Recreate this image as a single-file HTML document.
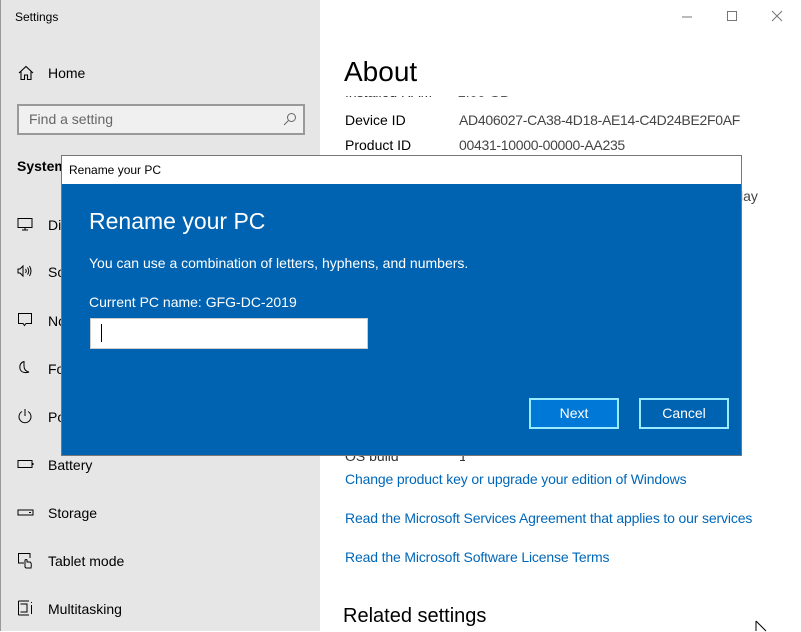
<!DOCTYPE html><html><head><style>
body{margin:0;width:801px;height:631px;overflow:hidden;position:relative;font-family:"Liberation Sans",sans-serif;background:#fff}
.a{position:absolute;white-space:nowrap}
.side{position:absolute;left:0;top:0;width:320px;height:631px;background:#e6e6e6;border-left:1px solid #999;box-sizing:border-box}
.nav{font-size:14px;color:#000}
.lnk{color:#0067b8;font-size:14px;letter-spacing:-0.15px}
.btn{position:absolute;top:398px;width:90px;height:31px;border:2px solid #99ebff;box-sizing:border-box;color:#fff;font-size:14px;text-align:center;line-height:27px}
</style></head><body>
<div class="side"></div>
<div class="a" style="left:15px;top:10px;font-size:12px">Settings</div>
<svg class="a" style="left:18px;top:65px" width="16" height="16" viewBox="0 0 16 16" fill="none" stroke="#000" stroke-width="1.1"><path d="M1 8 L8 1.5 L15 8 M3 6.5 V14.5 H6.5 V10 H9.5 V14.5 H13 V6.5"/></svg>
<div class="a nav" style="left:48px;top:65px">Home</div>
<div class="a" style="left:17px;top:104px;width:288px;height:31px;border:2px solid #999;box-sizing:border-box;background:#f0f0f0"></div>
<div class="a" style="left:29px;top:111px;font-size:14px;color:#666">Find a setting</div>
<svg class="a" style="left:283px;top:112px" width="14" height="14" viewBox="0 0 14 14" fill="none" stroke="#666"><circle cx="8.5" cy="5.5" r="4"/><path d="M5.5 8.5 L1 13"/></svg>
<div class="a" style="left:17px;top:158px;font-size:14px;font-weight:bold">System</div>
<svg class="a" style="left:17px;top:217px" width="16" height="14" fill="none" stroke="#000"><rect x="1" y="1.5" width="14" height="9"/><path d="M8 10.5V13M5 13H11"/></svg>
<div class="a nav" style="left:48px;top:217px">Di</div>
<svg class="a" style="left:17px;top:264px" width="16" height="14" fill="none" stroke="#000"><path d="M1 5H3L6 2V12L3 9H1Z M8.5 5Q10 7 8.5 9 M10.5 3.5Q13 7 10.5 10.5 M12.5 2Q15.5 7 12.5 12"/></svg>
<div class="a nav" style="left:48px;top:264px">So</div>
<svg class="a" style="left:17px;top:312px" width="16" height="16" fill="none" stroke="#000"><path d="M1.5 1.5H14.5V11.5H9L7.5 13.5L6 11.5H1.5Z"/></svg>
<div class="a nav" style="left:48px;top:313px">No</div>
<svg class="a" style="left:17px;top:360px" width="16" height="16" fill="none" stroke="#000"><path d="M7 1.5Q2 3 3 9Q5 14 12 12Q7 11 7 6Q7 3.5 7 1.5Z"/></svg>
<div class="a nav" style="left:48px;top:361px">Fo</div>
<svg class="a" style="left:17px;top:408px" width="16" height="16" fill="none" stroke="#000"><path d="M5 3.5A6 6 0 1 0 11 3.5M8 1V8"/></svg>
<div class="a nav" style="left:48px;top:409px">Po</div>
<svg class="a" style="left:17px;top:458px" width="18" height="12" fill="none" stroke="#000"><rect x="1" y="2.5" width="14" height="7"/><path d="M15.5 5V7" stroke-width="2"/></svg>
<div class="a nav" style="left:48px;top:457px">Battery</div>
<svg class="a" style="left:17px;top:507px" width="18" height="12" fill="none" stroke="#000"><rect x="1" y="3" width="15" height="5"/><path d="M12 5.5H14"/></svg>
<div class="a nav" style="left:48px;top:505px">Storage</div>
<svg class="a" style="left:17px;top:552px" width="18" height="18" fill="none" stroke="#000"><path d="M7 11H1.5V1.5H13V6M8 15V8Q9.5 7 10 8V10H13Q15 11 14 16H9Z"/></svg>
<div class="a nav" style="left:48px;top:553px">Tablet mode</div>
<svg class="a" style="left:17px;top:600px" width="18" height="18" fill="none" stroke="#000"><path d="M1.5 1H12M1.5 15H12M1.5 1V15M3.5 4H10V12H3.5M14.5 2V3M14.5 5V14"/></svg>
<div class="a nav" style="left:48px;top:601px">Multitasking</div>

<svg class="a" style="left:680px;top:10px" width="110" height="14" fill="none" stroke="#777"><path d="M2 7H12"/><rect x="47.5" y="1.5" width="9" height="9"/><path d="M92 1L102 11M102 1L92 11"/></svg>
<div class="a" style="left:344px;top:56px;font-size:28px">About</div>
<div class="a" style="left:345px;top:96px;width:400px;height:6px;overflow:hidden;font-size:14px;color:#333"><div style="margin-top:-12px">Installed RAM<span style="position:absolute;left:113px;color:#555">2.00 GB</span></div></div>
<div class="a" style="left:345px;top:112px;font-size:14px">Device ID</div>
<div class="a" style="left:459px;top:112px;font-size:14px;color:#444;letter-spacing:-0.3px">AD406027-CA38-4D18-AE14-C4D24BE2F0AF</div>
<div class="a" style="left:345px;top:137px;font-size:14px">Product ID</div>
<div class="a" style="left:459px;top:137px;font-size:14px;color:#444;letter-spacing:-0.3px">00431-10000-00000-AA235</div>
<div class="a" style="left:740px;top:188px;font-size:14px;color:#444">lay</div>
<div class="a" style="left:345px;top:447px;width:120px;height:14px;overflow:hidden;font-size:14px;color:#333"><div style="margin-top:1px">OS build<span style="position:absolute;left:114px">17763.5830</span></div></div>
<div class="a lnk" style="left:345px;top:471px">Change product key or upgrade your edition of Windows</div>
<div class="a lnk" style="left:345px;top:510px">Read the Microsoft Services Agreement that applies to our services</div>
<div class="a lnk" style="left:345px;top:549px">Read the Microsoft Software License Terms</div>
<div class="a" style="left:343px;top:605px;font-size:20px">Related settings</div>
<svg class="a" style="left:755px;top:620px" width="12" height="12" fill="none" stroke="#000"><path d="M1 1V11M1 1L11 11"/></svg>

<div class="a" style="left:61px;top:155px;width:681px;height:301px;border:1px solid #777;box-sizing:border-box;background:#0063b1"></div>
<div class="a" style="left:62px;top:156px;width:679px;height:28px;background:#fff"></div>
<div class="a" style="left:69px;top:163px;font-size:12px">Rename your PC</div>
<div class="a" style="left:89px;top:208px;font-size:23px;color:#fff">Rename your PC</div>
<div class="a" style="left:89px;top:255px;font-size:14px;color:#fff">You can use a combination of letters, hyphens, and numbers.</div>
<div class="a" style="left:89px;top:294px;font-size:14px;color:#fff">Current PC name: GFG-DC-2019</div>
<div class="a" style="left:90px;top:318px;width:278px;height:31px;background:#fff;border:1px solid #ccc;box-sizing:border-box"></div>
<div class="a" style="left:101px;top:324px;width:1px;height:18px;background:#000"></div>
<div class="btn" style="left:529px;background:#0078d7">Next</div>
<div class="btn" style="left:639px;background:#0063b1">Cancel</div>
</body></html>
